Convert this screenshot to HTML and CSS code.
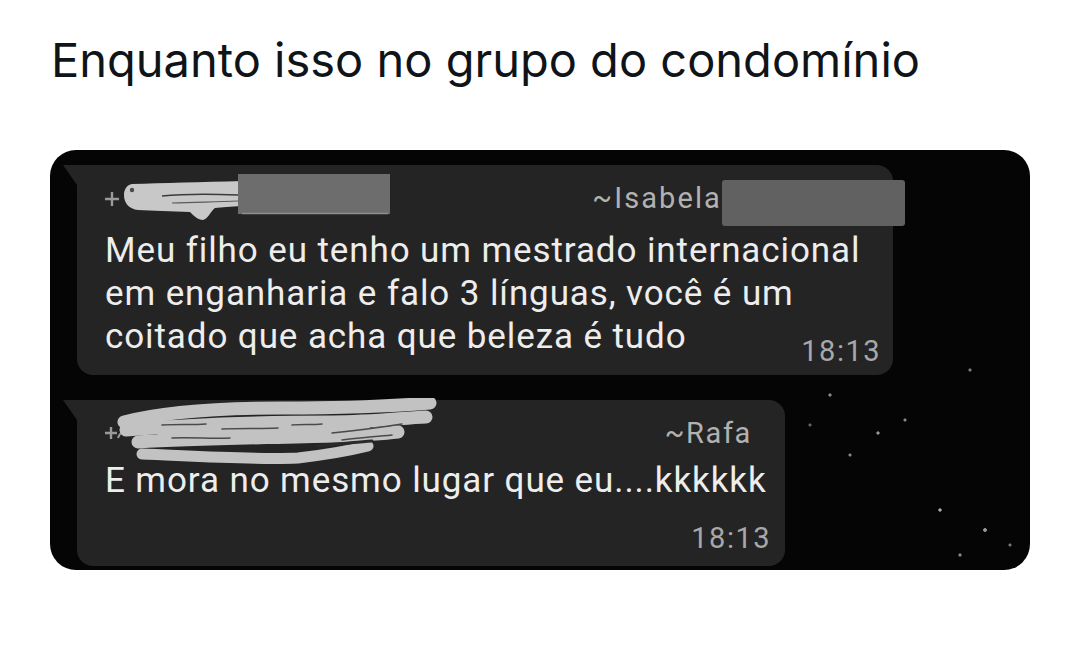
FILE: index.html
```html
<!DOCTYPE html>
<html lang="pt">
<head>
<meta charset="utf-8">
<link rel="stylesheet" href="styles.css">
</head>
<body>
<main class="post">
  <h1 class="title">Enquanto isso no grupo do condomínio</h1>
  <section class="shot">
    <div class="bubble bubble-1">
      <div class="head">
        <svg class="redact redact-1" width="300" height="60" viewBox="0 0 300 60">
          <path d="M3 34h14M10 27v14" stroke="#9a9a9a" stroke-width="2.4" fill="none"/>
          <path d="M22 30 C22 24 25 20 30 19 C60 18 100 17 140 16 L140 41 C128 42 120 42 113 43 C108 47 106 54 101 55 C96 55 92 51 88 47 C70 46 50 46 36 45 C27 44 22 38 22 30Z" fill="#c8c8c8"/>
          <circle cx="30" cy="25" r="2.2" fill="#4a4a4a"/>
          <path d="M60 31 C80 29 110 29 136 30" stroke="#3c3c3c" stroke-width="1.4" fill="none"/>
          <path d="M70 38 C95 37 115 37 136 36" stroke="#5a5a5a" stroke-width="1.2" fill="none"/>
          <rect x="136" y="9" width="152" height="40" fill="#6d6d6d"/>
          <path d="M140 48.5 H286" stroke="#8e8e8e" stroke-width="1.5"/>
        </svg>
        <div class="name-wrap">
          <span class="name">~Isabela</span>
          <span class="redact-box"></span>
        </div>
      </div>
      <p class="msg">Meu filho eu tenho um mestrado internacional<br>em enganharia e falo 3 línguas, você é um</p>
      <div class="last">
        <span class="msg">coitado que acha que beleza é tudo</span>
        <span class="time">18:13</span>
      </div>
    </div>
    <div class="bubble bubble-2">
      <div class="head">
        <svg class="redact redact-2" width="340" height="68" viewBox="0 0 340 68">
          <path d="M3 35h12M9 29v12" stroke="#9a9a9a" stroke-width="2.4" fill="none"/>
          <path d="M16 40 C18 34 22 33 26 36" stroke="#9a9a9a" stroke-width="2" fill="none"/>
          <g stroke="#c2c2c2" stroke-linecap="round" fill="none">
            <path d="M22 24 C60 14 120 10 180 10 C240 10 290 8 328 5" stroke-width="13"/>
            <path d="M24 32 C90 26 160 24 230 24 C270 24 300 20 324 19" stroke-width="13"/>
            <path d="M36 44 C100 40 170 40 230 38 C260 37 280 36 296 34" stroke-width="13"/>
            <path d="M40 56 C90 58 150 62 196 60 C230 56 250 52 266 48" stroke-width="11"/>
            <path d="M60 30 C120 34 200 30 260 30" stroke-width="16"/>
          </g>
          <g stroke="#4a4a4a" stroke-width="1.5" fill="none" stroke-linecap="round">
            <path d="M60 27 C75 26 90 27 104 26"/>
            <path d="M120 31 C140 30 160 31 176 30"/>
            <path d="M190 27 C200 26 210 27 220 26"/>
            <path d="M230 35 C250 33 275 30 300 26"/>
            <path d="M70 40 C90 39 110 41 128 40"/>
            <path d="M240 42 C255 40 270 39 290 37"/>
            <path d="M215 48 C235 46 255 44 270 43" stroke-width="3" stroke="#2a2a2a"/>
          </g>
        </svg>
        <span class="name">~Rafa</span>
      </div>
      <p class="msg">E mora no mesmo lugar que eu....kkkkkk</p>
      <div class="time-row"><span class="time">18:13</span></div>
    </div>
  </section>
</main>
</body>
</html>
```

FILE: styles.css
```css
* { box-sizing: border-box; }
html, body { margin: 0; padding: 0; background: #fff; }
body { width: 1079px; height: 650px; overflow: hidden; }

.post { padding: 28px 49px 0 50px; }

.title {
  margin: 0 0 0 1px;
  font-family: "Inter", "Liberation Sans", sans-serif;
  font-weight: 400;
  font-size: 47px;
  line-height: 64px;
  color: #0f1419;
  letter-spacing: 0;
}

.shot {
  margin-top: 58px;
  width: 980px;
  height: 420px;
  background-color: #050505;
  background-image:
    radial-gradient(circle at 920px 220px, #777 0 1.2px, transparent 2px),
    radial-gradient(circle at 935px 380px, #999 0 1.5px, transparent 2.2px),
    radial-gradient(circle at 855px 270px, #888 0 1px, transparent 2px),
    radial-gradient(circle at 890px 360px, #aaa 0 1.3px, transparent 2px),
    radial-gradient(circle at 910px 405px, #888 0 1.2px, transparent 2px),
    radial-gradient(circle at 960px 395px, #777 0 1px, transparent 2px),
    radial-gradient(circle at 780px 245px, #888 0 1.2px, transparent 2px),
    radial-gradient(circle at 760px 275px, #666 0 1px, transparent 2px),
    radial-gradient(circle at 828px 283px, #999 0 1.2px, transparent 2px),
    radial-gradient(circle at 800px 305px, #888 0 1px, transparent 2px);
  border-radius: 26px;
  padding: 15px 0 0 27px;
  display: flex;
  flex-direction: column;
  gap: 25px;
  overflow: hidden;
}

.bubble {
  position: relative;
  background: #242424;
  border-radius: 0 16px 16px 16px;
  color: #ececec;
  font-family: "Roboto", "Liberation Sans", sans-serif;
}
.bubble::before {
  content: "";
  position: absolute;
  left: -14px;
  top: 0;
  border-top: 20px solid #242424;
  border-left: 14px solid transparent;
}

.bubble-1 { width: 816px; height: 210px; padding: 15px 12px 0 28px; }
.bubble-2 { width: 708px; height: 166px; padding: 15px 14px 0 28px; }

.head { display: flex; justify-content: space-between; align-items: flex-start; }
.bubble-1 .head { height: 49px; }
.bubble-2 .head { height: 44px; }

.redact { display: block; flex: none; }
.redact-1 { margin: -15px 0 0 -3px; }
.redact-2 { margin: -17px 0 0 -3px; }

.name-wrap { display: flex; align-items: flex-start; margin-right: -24px; }
.name { font-size: 29px; line-height: 36px; letter-spacing: 2.1px; color: #b2b2b2; }
.redact-box { width: 183px; height: 46px; background: #616161; border-radius: 3px; }
.bubble-2 .name { margin-right: 19px; letter-spacing: 1.6px; }

.msg {
  margin: 0;
  font-size: 35px;
  line-height: 43px;
  letter-spacing: 0.9px;
  color: #ededed;
}

.last { display: flex; justify-content: space-between; align-items: flex-end; }
.time { font-size: 29px; line-height: 30px; letter-spacing: 1.5px; color: #a8a8a8; }
.bubble-1 .time { margin-bottom: -8px; }

.time-row { display: flex; justify-content: flex-end; margin-top: 21px; }
```
